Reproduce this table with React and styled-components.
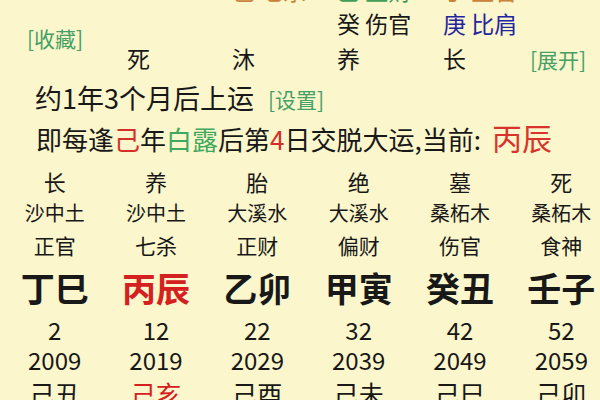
import React from "react";
import styled, { createGlobalStyle } from "styled-components";

const GlobalStyle = createGlobalStyle`
  html, body {
    margin: 0;
    padding: 0;
    background: #fbf6cb;
    overflow: hidden;
  }
  body {
    width: 600px;
    height: 400px;
    font-family: "Noto Sans CJK SC", "Noto Sans", sans-serif;
    color: #181818;
  }
`;

const hidden = [
  { text: "", color: "#181818" },
  { text: "己 七杀", color: "#c9843a" },
  { text: "乙 正财", color: "#3f9e58" },
  { text: "丁 正官", color: "#c9843a" },
];

const cangGan = [
  { text: "", color: "#181818" },
  { text: "", color: "#181818" },
  { text: "癸 伤官", color: "#181818" },
  { text: "庚 比肩", color: "#2424a0" },
];

const states = ["死", "沐", "养", "长"];

const dayun = [
  { state: "长", nayin: "沙中土", god: "正官", gz: "丁巳", age: 2, year: 2009, liu: "己丑" },
  { state: "养", nayin: "沙中土", god: "七杀", gz: "丙辰", age: 12, year: 2019, liu: "己亥", active: true },
  { state: "胎", nayin: "大溪水", god: "正财", gz: "乙卯", age: 22, year: 2029, liu: "己酉" },
  { state: "绝", nayin: "大溪水", god: "偏财", gz: "甲寅", age: 32, year: 2039, liu: "己未" },
  { state: "墓", nayin: "桑柘木", god: "伤官", gz: "癸丑", age: 42, year: 2049, liu: "己巳" },
  { state: "死", nayin: "桑柘木", god: "食神", gz: "壬子", age: 52, year: 2059, liu: "己卯" },
];

const App = () => {
  return (
    <>
      <GlobalStyle />
      <Page>
        <TopSection>
          <Side>
            <Link>[收藏]</Link>
          </Side>
          <PillarGrid>
            {hidden.map((h, i) => (
              <PillarCell key={"h" + i} $color={h.color}>
                {h.text}
              </PillarCell>
            ))}
            <PillarCell />
            {cangGan.map((h, i) => (
              <PillarCell key={"c" + i} $color={h.color}>
                {h.text}
              </PillarCell>
            ))}
            <PillarCell />
            {states.map((s) => (
              <PillarCell key={s}>{s}</PillarCell>
            ))}
            <PillarCell>
              <Link>[展开]</Link>
            </PillarCell>
          </PillarGrid>
        </TopSection>

        <StartLine>
          约1年3个月后上运
          <Link>[设置]</Link>
        </StartLine>

        <RuleLine>
          即每逢<Red>己</Red>年<Green>白露</Green>后第<Red>4</Red>日交脱大运,当前:
          <Current>丙辰</Current>
        </RuleLine>

        <Table>
          <Row $size={22} $height={32}>
            {dayun.map((d, i) => (
              <Cell key={i}>{d.state}</Cell>
            ))}
          </Row>
          <Row $size={20} $height={32}>
            {dayun.map((d, i) => (
              <Cell key={i}>{d.nayin}</Cell>
            ))}
          </Row>
          <Row $size={21} $height={32}>
            {dayun.map((d, i) => (
              <Cell key={i}>{d.god}</Cell>
            ))}
          </Row>
          <Row $size={34} $height={54} $bold>
            {dayun.map((d, i) => (
              <Cell key={i} $active={d.active}>
                {d.gz}
              </Cell>
            ))}
          </Row>
          <Row $size={24} $height={30}>
            {dayun.map((d, i) => (
              <Cell key={i}>{d.age}</Cell>
            ))}
          </Row>
          <Row $size={24} $height={30}>
            {dayun.map((d, i) => (
              <Cell key={i}>{d.year}</Cell>
            ))}
          </Row>
          <Row $size={25} $height={36}>
            {dayun.map((d, i) => (
              <Cell key={i} $active={d.active}>
                {d.liu}
              </Cell>
            ))}
          </Row>
        </Table>
      </Page>
    </>
  );
};

const Page = styled.div`
  width: 600px;
  height: 400px;
  overflow: hidden;
`;

const TopSection = styled.div`
  display: flex;
  margin-top: -25px;
  padding-bottom: 12px;
`;

const Side = styled.div`
  width: 127px;
  padding-left: 27px;
  padding-top: 51px;
  box-sizing: border-box;
`;

const Link = styled.span`
  color: #45a066;
  font-size: 21px;
  line-height: 24px;
`;

const PillarGrid = styled.div`
  display: grid;
  grid-template-columns: 105px 105px 106px 87px 70px;
  grid-template-rows: 28px 30px 30px;
  row-gap: 5px;
`;

const PillarCell = styled.div`
  font-size: 23px;
  line-height: 30px;
  white-space: pre;
  color: ${(p) => p.$color || "#181818"};
`;

const StartLine = styled.div`
  padding-left: 35px;
  font-size: 27px;
  line-height: 26px;
  height: 29px;
  white-space: nowrap;

  ${Link} {
    margin-left: 14px;
    vertical-align: 1px;
  }
`;

const RuleLine = styled.div`
  padding-left: 36px;
  font-size: 26px;
  line-height: 46px;
  height: 51px;
  white-space: nowrap;
`;

const Red = styled.span`
  color: #d4302a;
`;

const Green = styled.span`
  color: #3ea85e;
`;

const Current = styled.span`
  color: #d8342c;
  font-size: 30px;
  margin-left: 11px;
`;

const Table = styled.div`
  width: 608px;
  margin-left: 4px;
`;

const Row = styled.div`
  display: grid;
  grid-template-columns: repeat(6, 1fr);
  height: ${(p) => p.$height}px;
  line-height: ${(p) => p.$height}px;
  font-size: ${(p) => p.$size}px;
  font-weight: ${(p) => (p.$bold ? 700 : 400)};
`;

const Cell = styled.div`
  text-align: center;
  white-space: nowrap;
  color: ${(p) => (p.$active ? "#d42020" : "#181818")};
`;

export default App;
